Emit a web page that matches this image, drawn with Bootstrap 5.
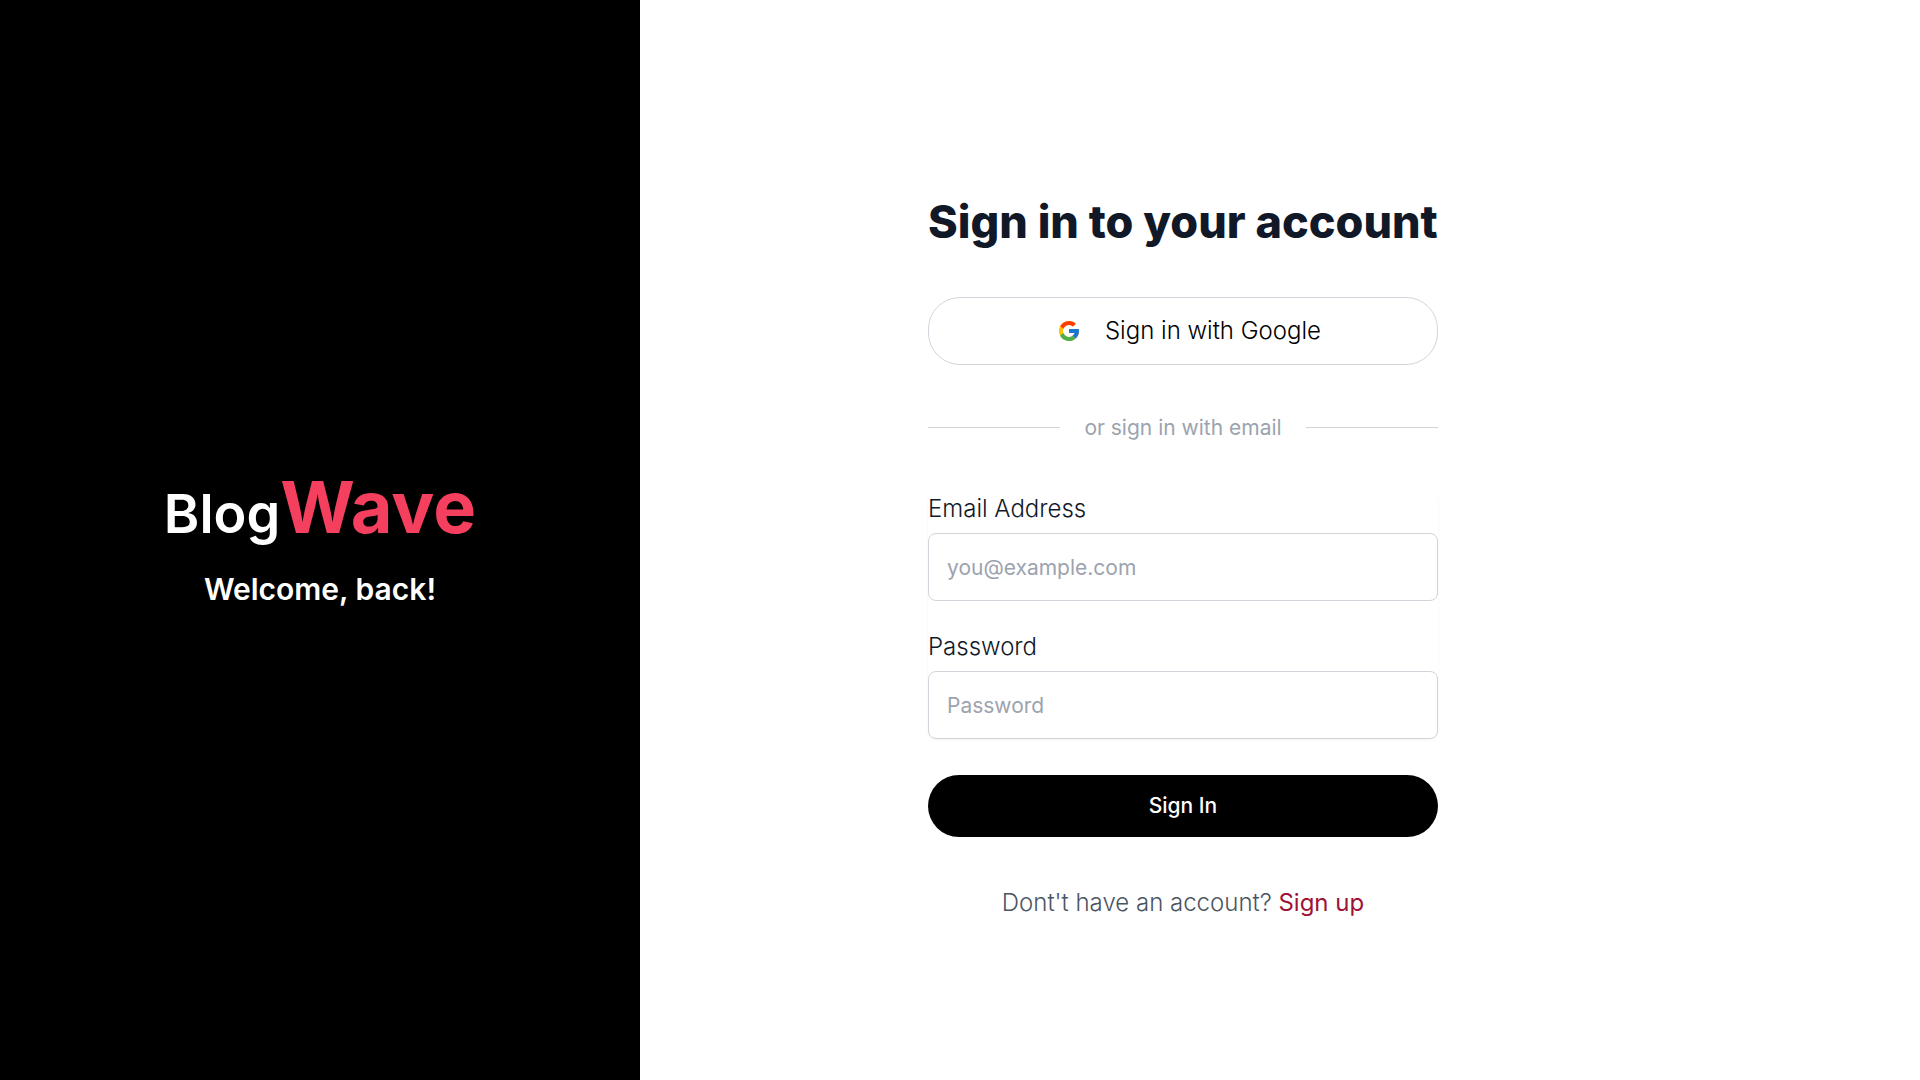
<!DOCTYPE html>
<html lang="en">
<head>
<meta charset="utf-8">
<meta name="viewport" content="width=device-width, initial-scale=1">
<title>BlogWave - Sign in</title>
<link href="https://cdn.jsdelivr.net/npm/bootstrap@5.3.0/dist/css/bootstrap.min.css" rel="stylesheet">
<style>
  body { font-family: Inter, "Liberation Sans", sans-serif; font-weight: 300; color: #111827; background: #fff; }
  .brand-name { font-size: 54px; font-weight: 600; line-height: 72px; margin-bottom: 19px; }
  .brand-accent { font-size: 72px; font-weight: 700; color: #f43f5e; }
  .brand-greeting { font-size: 30px; font-weight: 600; line-height: 40px; }
  .signin-wrap { padding: 62px 16px 24px; }
  .signin-panel { max-width: 510px; }
  @media (min-width: 1200px) { .signin-wrap { padding-left: 15%; } }
  .signin-title { font-size: 45px; font-weight: 800; line-height: 50px; margin-bottom: 50px; }
  .btn-google { height: 68px; padding-left: 24px; border: 1px solid #d1d5db; border-radius: 32px; background: #fff; color: #000; font-size: 24px; font-weight: 300; gap: 24px; }
  .btn-google:hover { border-color: #9ca3af; background: #f9fafb; }
  .or-divider { gap: 24px; margin: 47px 0 50px; font-size: 21px; font-weight: 400; line-height: 31px; color: #9ca3af; }
  .or-divider::before, .or-divider::after { content: ""; flex: 1; height: 1px; background: #d1d5db; }
  .field-group { gap: 30px; border-radius: 8px; background: #fff; box-shadow: 0 1px 3px rgba(0, 0, 0, .05); }
  .field-label { font-size: 24px; line-height: 32px; }
  .field-input { height: 68px; padding: 0 18px; border: 1px solid #d1d5db; border-radius: 8px; font-size: 21px; font-weight: 400; color: #111827; background: #fff; }
  .field-input::placeholder { color: #9ca3af; }
  .btn-signin, .btn-signin:hover { height: 62px; margin-top: 36px; border: 0; border-radius: 32px; background: #000; color: #fff; font-size: 21px; font-weight: 500; }
  .signup-line { margin-top: 48px; font-size: 24px; line-height: 36px; color: #4b5563; }
  .signup-line a { color: #9f1239; font-weight: 400; }
</style>
<script src="https://cdn.jsdelivr.net/npm/bootstrap@5.3.0/dist/js/bootstrap.bundle.min.js" defer></script>
</head>
<body>
<div class="container-fluid p-0">
  <div class="row g-0 min-vh-100">
    <aside class="col-lg-4 bg-black text-white d-flex flex-column align-items-center justify-content-center py-4">
      <h1 class="brand-name">Blog<span class="brand-accent">Wave</span></h1>
      <p class="brand-greeting mb-0">Welcome, back!</p>
    </aside>
    <main class="col-lg-8 signin-wrap d-flex flex-column justify-content-center">
      <div class="signin-panel w-100">
        <h2 class="signin-title text-nowrap">Sign in to your account</h2>
        <button type="button" class="btn btn-google w-100 d-flex align-items-center justify-content-center">
          <svg width="24" height="24" viewBox="0 0 48 48" aria-hidden="true">
            <path fill="#FFC107" d="M43.611 20.083H42V20H24v8h11.303C33.654 32.657 29.223 36 24 36c-6.627 0-12-5.373-12-12s5.373-12 12-12c3.059 0 5.842 1.154 7.961 3.039l5.657-5.657C34.046 6.053 29.268 4 24 4 12.955 4 4 12.955 4 24s8.955 20 20 20 20-8.955 20-20c0-1.341-.138-2.65-.389-3.917z"/>
            <path fill="#FF3D00" d="M6.306 14.691l6.571 4.819C14.655 15.108 18.961 12 24 12c3.059 0 5.842 1.154 7.961 3.039l5.657-5.657C34.046 6.053 29.268 4 24 4 16.318 4 9.656 8.337 6.306 14.691z"/>
            <path fill="#4CAF50" d="M24 44c5.166 0 9.86-1.977 13.409-5.192l-6.19-5.238C29.211 35.091 26.715 36 24 36c-5.202 0-9.619-3.317-11.283-7.946l-6.522 5.025C9.505 39.556 16.227 44 24 44z"/>
            <path fill="#1976D2" d="M43.611 20.083H42V20H24v8h11.303a12.04 12.04 0 0 1-4.087 5.571l.003-.002 6.19 5.238C36.971 39.205 44 34 44 24c0-1.341-.138-2.65-.389-3.917z"/>
          </svg>
          <span>Sign in with Google</span>
        </button>
        <div class="or-divider d-flex align-items-center">or sign in with email</div>
        <form>
          <div class="field-group d-flex flex-column">
            <div>
              <label for="email" class="field-label d-block mb-2">Email Address</label>
              <input type="email" id="email" class="field-input form-control" placeholder="you@example.com">
            </div>
            <div>
              <label for="password" class="field-label d-block mb-2">Password</label>
              <input type="password" id="password" class="field-input form-control" placeholder="Password">
            </div>
          </div>
          <button type="submit" class="btn btn-signin w-100">Sign In</button>
        </form>
        <p class="signup-line text-center mb-0">Dont't have an account? <a href="#" class="text-decoration-none">Sign up</a></p>
      </div>
    </main>
  </div>
</div>
</body>
</html>
